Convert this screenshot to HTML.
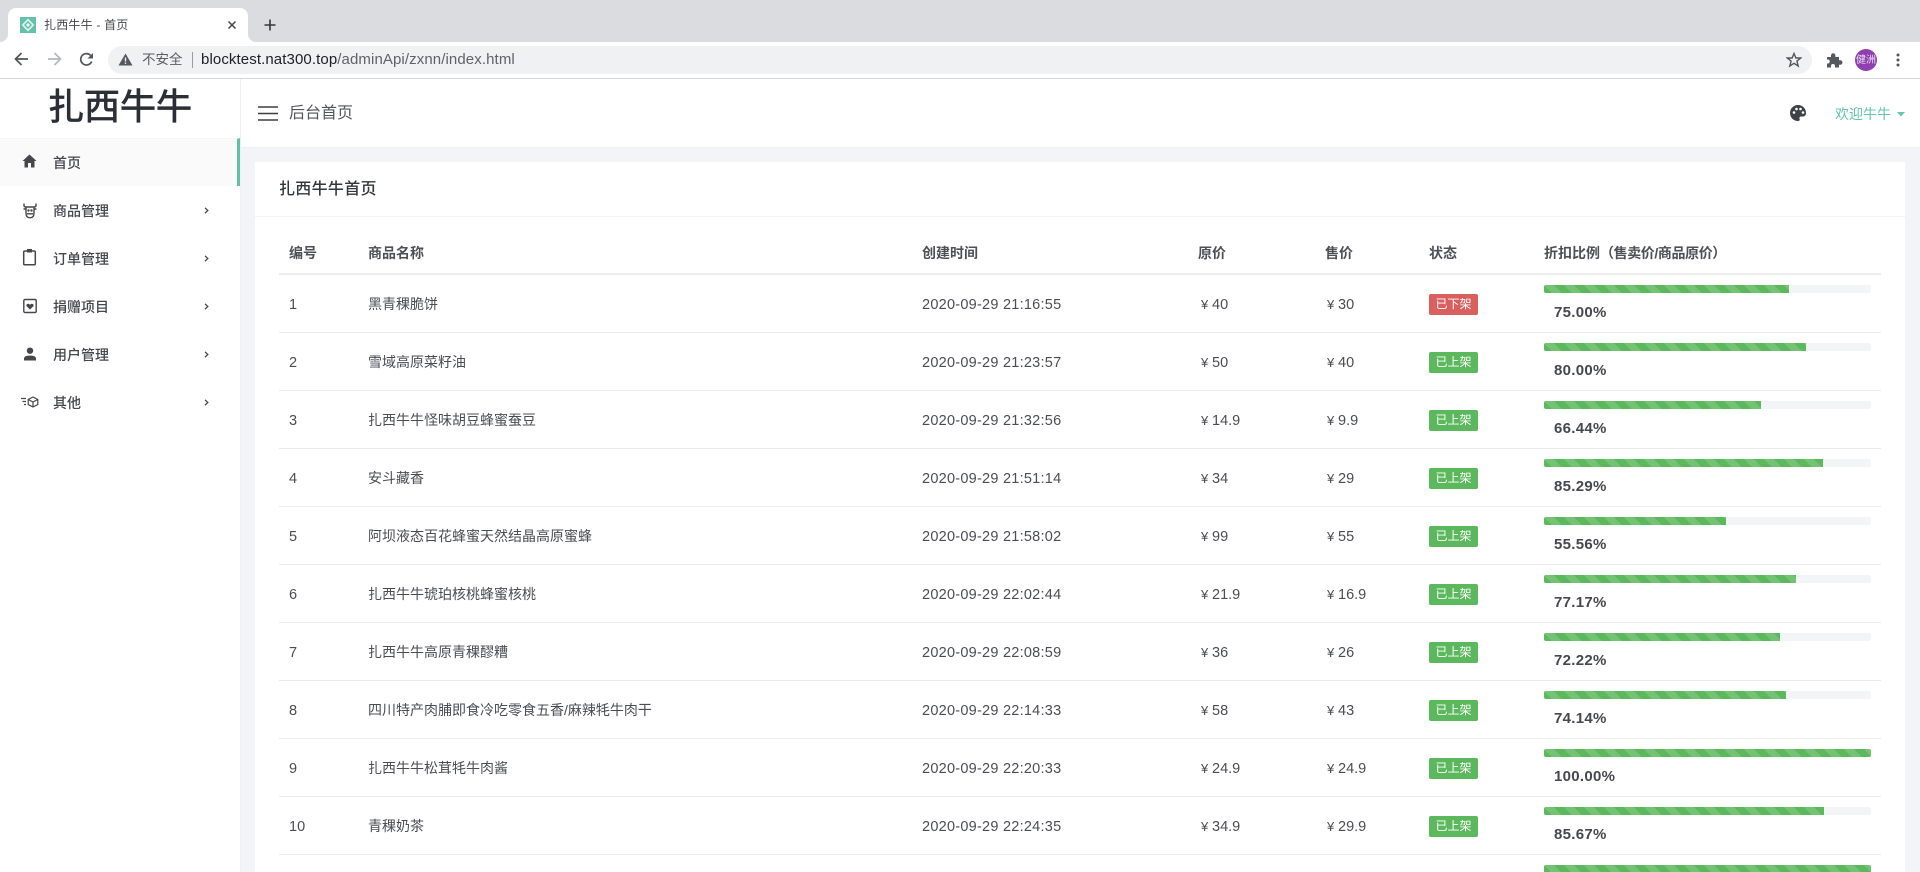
<!DOCTYPE html>
<html lang="zh">
<head>
<meta charset="utf-8">
<title>扎西牛牛 - 首页</title>
<style>
*{box-sizing:border-box;margin:0;padding:0}
html,body{width:1920px;height:872px;overflow:hidden;background:#f3f4f8}
body{position:relative;font-family:"Liberation Sans","Noto Sans CJK SC",sans-serif;color:#46484e;font-size:14px}
.a{position:absolute;white-space:nowrap}
svg{position:absolute;display:block}
#tabs{left:0;top:0;width:1920px;height:42px;background:#dadce0}
#tab{left:8px;top:8px;width:240px;height:34px;background:#fff;border-radius:8px 8px 0 0}
.fl{position:absolute;top:26px;width:8px;height:8px;background:#fff}
.fl i{display:block;width:8px;height:8px;background:#dadce0}
#bar{left:0;top:42px;width:1920px;height:37px;background:#fff;border-bottom:1px solid #d4d5d7}
#url{left:108px;top:46px;width:1704px;height:28px;border-radius:14px;background:#eff1f3}
#side{left:0;top:79px;width:241px;height:793px;background:#fff;border-right:1px solid #eef0f3}
.mi{left:53px;font-size:14px;font-weight:500;line-height:20px;color:#45474d}
#act{left:0;top:138px;width:240px;height:48px;background:#fafafb;border-top:1px solid #f5f5f6;border-right:3px solid #62bfa9}
#head{left:241px;top:79px;width:1679px;height:69px;background:#fff;border-bottom:1px solid #eef0f3}
#card{left:255px;top:162px;width:1650px;height:710px;background:#fff}
#chd{left:255px;top:216px;width:1650px;height:1px;background:#f3f4f5}
.th{top:243px;line-height:20px;font-weight:700;font-size:14px;color:#4e5056}
#thl{left:279px;top:273px;width:1602px;height:2px;background:#ebecee}
.r{position:absolute;left:279px;width:1602px;height:58px;border-bottom:1px solid #e9eaec}
.c{position:absolute;top:19px;line-height:20px;white-space:nowrap;color:#4b4d53}
.n{left:10px;font-size:14.5px;top:20px}
.t{left:89px}
.d{left:643px;font-size:14.5px;letter-spacing:.25px;top:20px}
.p1{left:922px;top:20px}
.p2{left:1048px;top:20px}
.p1 b,.p2 b{font-weight:400;display:inline-block;width:11px;font-size:13px}
.p1,.p2{font-size:14.5px}
.b{position:absolute;left:1150px;top:19px;width:49px;height:21px;border-radius:2px;background:#5cb85c;color:#fff;font-size:12px;line-height:21px;text-align:center}
.b.x{background:#d9605f}
.tr{position:absolute;left:1265px;top:10px;width:327px;height:8px;background:#f3f4f6;border-radius:2px;overflow:hidden}
.f{height:8px;background-color:#5cb85c;background-image:linear-gradient(45deg,rgba(255,255,255,.15) 25%,transparent 25%,transparent 50%,rgba(255,255,255,.15) 50%,rgba(255,255,255,.15) 75%,transparent 75%);background-size:20px 20px}
.v{position:absolute;left:1275px;top:28px;line-height:20px;font-weight:700;font-size:15px;letter-spacing:.3px;color:#46484e}
</style>
</head>
<body>
<div class="a" id="tabs"></div>
<div class="a" id="tab">
  <div class="fl" style="left:-8px"><i style="border-radius:0 0 8px 0"></i></div>
  <div class="fl" style="left:240px"><i style="border-radius:0 0 0 8px"></i></div>
</div>
<svg style="left:20px;top:17px" width="16" height="16" viewBox="0 0 16 16"><rect width="16" height="16" fill="#62c0ab"/><path d="M8 1.500L14.500 8L8 14.500L1.500 8Z" fill="#d9f1ec"/><path d="M8 4L12 8L8 12L4 8Z" fill="#62c0ab"/><path d="M8 6L10 8L8 10L6 8Z" fill="#fff"/></svg>
<div class="a" style="left:44px;top:16px;font-size:12px;line-height:18px;color:#45474b;letter-spacing:.2px">扎西牛牛 - 首页</div>
<svg style="left:227px;top:20px" width="10" height="10" viewBox="0 0 10 10"><path d="M1.500 1.500L8.500 8.500M8.500 1.500L1.500 8.500" stroke="#44464a" stroke-width="1.500" fill="none"/></svg>
<svg style="left:264px;top:19px" width="12" height="12" viewBox="0 0 12 12"><path d="M6 .5V11.500M.5 6H11.500" stroke="#35373b" stroke-width="1.600" fill="none"/></svg>

<div class="a" id="bar"></div>
<svg style="left:14px;top:52px" width="15" height="14" viewBox="0 0 15 14"><path d="M14 7H2M7.500 1L1.500 7L7.500 13" stroke="#53565b" stroke-width="1.700" fill="none"/></svg>
<svg style="left:47px;top:52px" width="15" height="14" viewBox="0 0 15 14"><path d="M1 7H13M7.500 1L13.500 7L7.500 13" stroke="#b6b8bb" stroke-width="1.700" fill="none"/></svg>
<svg style="left:79px;top:52px" width="15" height="15" viewBox="0 0 15 15"><path d="M12.700 9.500A5.700 5.700 0 1 1 11.600 3.400" stroke="#53565b" stroke-width="1.700" fill="none"/><path d="M14 1V6.500H8.500Z" fill="#53565b"/></svg>
<div class="a" id="url"></div>
<svg style="left:118px;top:53px" width="15" height="13" viewBox="0 0 15 13"><path d="M7.500 .5L14.500 12.500H.5Z" fill="#55585c"/><rect x="6.800" y="4.500" width="1.400" height="4" fill="#eff1f3"/><rect x="6.800" y="9.500" width="1.400" height="1.400" fill="#eff1f3"/></svg>
<div class="a" style="left:142px;top:51px;font-size:13.500px;line-height:18px;color:#5a5c60">不安全</div>
<div class="a" style="left:192px;top:52px;width:1px;height:16px;background:#9a9c9f"></div>
<div class="a" style="left:201px;top:51px;font-size:15px;line-height:18px;color:#5f6266;letter-spacing:.1px"><span style="color:#202124">blocktest.nat300.top</span>/adminApi/zxnn/index.html</div>
<svg style="left:1786px;top:52px" width="16" height="16" viewBox="0 0 16 16"><path d="M8 1.500L9.900 6H14.700L10.900 9.100L12.200 14L8 11.300L3.800 14L5.100 9.100L1.300 6H6.100Z" stroke="#53565b" stroke-width="1.400" fill="none"/></svg>
<svg style="left:1826px;top:52px" width="17" height="16" viewBox="0 0 17 16"><path d="M1 5H5V3.500A2.200 2.200 0 0 1 9.400 3.500V5H13V8.200H14.200A2.300 2.300 0 0 1 14.200 12.800H13V15.500H9V14A2 2 0 0 0 5 14V15.500H1V11.500H2.500A2.200 2.200 0 0 0 2.500 7.500H1Z" fill="#55585d"/></svg>
<svg style="left:1855px;top:49px" width="22" height="22" viewBox="0 0 22 22"><circle cx="11" cy="11" r="11" fill="#8e3fb0"/></svg>
<div class="a" style="left:1855px;top:49px;width:22px;text-align:center;font-size:10px;line-height:23px;color:#ecdff2">健洲</div>
<svg style="left:1895px;top:52px" width="6" height="16" viewBox="0 0 6 16"><circle cx="3" cy="3" r="1.500" fill="#53565b"/><circle cx="3" cy="8" r="1.500" fill="#53565b"/><circle cx="3" cy="13" r="1.500" fill="#53565b"/></svg>

<div class="a" id="side"></div>
<div class="a" style="left:0;top:79px;width:240px;text-align:center;font-size:36px;line-height:55px;font-weight:400;-webkit-text-stroke:.8px #2b2f36;color:#2b2f36">扎西牛牛</div>
<div class="a" id="act"></div>
<svg style="left:22px;top:154px" width="15" height="14" viewBox="0 0 15 14"><path d="M7.500 .5L14.500 7H12.500V13.500H9V9H6V13.500H2.500V7H.5Z" fill="#45474d"/></svg>
<div class="a mi" style="top:153px">首页</div>

<svg style="left:23px;top:203px" width="14" height="16" viewBox="0 0 14 16" fill="none" stroke="#45474d" stroke-width="1.400"><path d="M1 .5V2.500Q1 4 3 4H11Q13 4 13 2.500V.5"/><path d="M.5 6H3M11 6H13.500"/><path d="M3 4V10Q3 14.800 7 14.800Q11 14.800 11 10V4"/><path d="M4 10.800H10"/><circle cx="5.500" cy="7.500" r=".5" fill="#45474d"/><circle cx="8.500" cy="7.500" r=".5" fill="#45474d"/></svg>
<div class="a mi" style="top:201px">商品管理</div>
<svg style="left:204px;top:207px" width="5" height="7" viewBox="0 0 5 7"><path d="M1 .8L3.800 3.500L1 6.200" stroke="#45474d" stroke-width="1.300" fill="none"/></svg>

<svg style="left:22px;top:248px" width="15" height="18" viewBox="0 0 15 18" fill="none"><rect x="1.700" y="3" width="11.600" height="13.800" rx="1.200" stroke="#45474d" stroke-width="1.500"/><rect x="5" y="1" width="5" height="3.500" fill="#45474d"/></svg>
<div class="a mi" style="top:249px">订单管理</div>
<svg style="left:204px;top:255px" width="5" height="7" viewBox="0 0 5 7"><path d="M1 .8L3.800 3.500L1 6.200" stroke="#45474d" stroke-width="1.300" fill="none"/></svg>

<svg style="left:23px;top:298px" width="14" height="16" viewBox="0 0 14 16" fill="none"><rect x=".8" y="1.500" width="12.400" height="13" rx="1.200" stroke="#45474d" stroke-width="1.400"/><path d="M7 11.500L3.600 8.200Q3 6.800 4.200 6Q5.600 5.300 7 6.800Q8.400 5.300 9.800 6Q11 6.800 10.400 8.200Z" fill="#45474d"/></svg>
<div class="a mi" style="top:297px">捐赠项目</div>
<svg style="left:204px;top:303px" width="5" height="7" viewBox="0 0 5 7"><path d="M1 .8L3.800 3.500L1 6.200" stroke="#45474d" stroke-width="1.300" fill="none"/></svg>

<svg style="left:23px;top:347px" width="14" height="14" viewBox="0 0 14 14"><circle cx="7" cy="3.700" r="3.200" fill="#45474d"/><path d="M1 13.500V11.500Q1 8.500 7 8.500Q13 8.500 13 11.500V13.500Z" fill="#45474d"/></svg>
<div class="a mi" style="top:345px">用户管理</div>
<svg style="left:204px;top:351px" width="5" height="7" viewBox="0 0 5 7"><path d="M1 .8L3.800 3.500L1 6.200" stroke="#45474d" stroke-width="1.300" fill="none"/></svg>

<svg style="left:21px;top:396px" width="18" height="12" viewBox="0 0 18 12" fill="none" stroke="#45474d" stroke-width="1.200"><path d="M0 2.500H5M1.500 5.500H5M3 8.500H5"/><path d="M12 1L16.800 3.500V8.500L12 11L7.200 8.500V3.500Z"/><path d="M7.200 3.500L12 6L16.800 3.500M12 6V11"/></svg>
<div class="a mi" style="top:393px">其他</div>
<svg style="left:204px;top:399px" width="5" height="7" viewBox="0 0 5 7"><path d="M1 .8L3.800 3.500L1 6.200" stroke="#45474d" stroke-width="1.300" fill="none"/></svg>

<div class="a" id="head"></div>
<svg style="left:258px;top:106px" width="20" height="16" viewBox="0 0 20 16"><path d="M0 1H20M0 7.500H20M0 14H20" stroke="#3c3e44" stroke-width="1.600" fill="none"/></svg>
<div class="a" style="left:289px;top:103px;font-size:16px;line-height:21px;color:#53555a">后台首页</div>
<svg style="left:1789px;top:104px" width="18" height="18" viewBox="0 0 18 18"><path d="M9 1C4.500 1 1 4.500 1 9C1 13.500 4.500 17 9 17C10.500 17 11 16 10.600 15C10.200 14 10.500 12.500 12 12.500H14C15.800 12.500 17 11 17 9C17 4.500 13.500 1 9 1Z" fill="#3f4147"/><circle cx="5" cy="8.500" r="1.300" fill="#fff"/><circle cx="7.500" cy="5" r="1.300" fill="#fff"/><circle cx="11.500" cy="5" r="1.300" fill="#fff"/><circle cx="14" cy="8.500" r="1.300" fill="#fff"/></svg>
<div class="a" style="left:1835px;top:104px;font-size:14px;line-height:20px;color:#62c6ad">欢迎牛牛</div>
<svg style="left:1897px;top:112px" width="8" height="5" viewBox="0 0 8 5"><path d="M0 0H8L4 4.500Z" fill="#62c6ad"/></svg>

<div class="a" id="card"></div>
<div class="a" style="left:279px;top:178px;font-size:16px;line-height:24px;font-weight:500;color:#33363c;letter-spacing:.3px">扎西牛牛首页</div>
<div class="a" id="chd"></div>

<div class="a th" style="left:289px">编号</div>
<div class="a th" style="left:368px">商品名称</div>
<div class="a th" style="left:922px">创建时间</div>
<div class="a th" style="left:1198px">原价</div>
<div class="a th" style="left:1325px">售价</div>
<div class="a th" style="left:1429px">状态</div>
<div class="a th" style="left:1544px">折扣比例<span style="letter-spacing:-.4px">（售卖价/商品原价）</span></div>
<div class="a" id="thl"></div>

<div class="r" style="top:275px"><span class="c n">1</span><span class="c t">黑青稞脆饼</span><span class="c d">2020-09-29 21:16:55</span><span class="c p1"><b>¥</b>40</span><span class="c p2"><b>¥</b>30</span><span class="b x">已下架</span><div class="tr"><div class="f" style="width:75%"></div></div><span class="v">75.00%</span></div>
<div class="r" style="top:333px"><span class="c n">2</span><span class="c t">雪域高原菜籽油</span><span class="c d">2020-09-29 21:23:57</span><span class="c p1"><b>¥</b>50</span><span class="c p2"><b>¥</b>40</span><span class="b">已上架</span><div class="tr"><div class="f" style="width:80%"></div></div><span class="v">80.00%</span></div>
<div class="r" style="top:391px"><span class="c n">3</span><span class="c t">扎西牛牛怪味胡豆蜂蜜蚕豆</span><span class="c d">2020-09-29 21:32:56</span><span class="c p1"><b>¥</b>14.9</span><span class="c p2"><b>¥</b>9.9</span><span class="b">已上架</span><div class="tr"><div class="f" style="width:66.44%"></div></div><span class="v">66.44%</span></div>
<div class="r" style="top:449px"><span class="c n">4</span><span class="c t">安斗藏香</span><span class="c d">2020-09-29 21:51:14</span><span class="c p1"><b>¥</b>34</span><span class="c p2"><b>¥</b>29</span><span class="b">已上架</span><div class="tr"><div class="f" style="width:85.29%"></div></div><span class="v">85.29%</span></div>
<div class="r" style="top:507px"><span class="c n">5</span><span class="c t">阿坝液态百花蜂蜜天然结晶高原蜜蜂</span><span class="c d">2020-09-29 21:58:02</span><span class="c p1"><b>¥</b>99</span><span class="c p2"><b>¥</b>55</span><span class="b">已上架</span><div class="tr"><div class="f" style="width:55.56%"></div></div><span class="v">55.56%</span></div>
<div class="r" style="top:565px"><span class="c n">6</span><span class="c t">扎西牛牛琥珀核桃蜂蜜核桃</span><span class="c d">2020-09-29 22:02:44</span><span class="c p1"><b>¥</b>21.9</span><span class="c p2"><b>¥</b>16.9</span><span class="b">已上架</span><div class="tr"><div class="f" style="width:77.17%"></div></div><span class="v">77.17%</span></div>
<div class="r" style="top:623px"><span class="c n">7</span><span class="c t">扎西牛牛高原青稞醪糟</span><span class="c d">2020-09-29 22:08:59</span><span class="c p1"><b>¥</b>36</span><span class="c p2"><b>¥</b>26</span><span class="b">已上架</span><div class="tr"><div class="f" style="width:72.22%"></div></div><span class="v">72.22%</span></div>
<div class="r" style="top:681px"><span class="c n">8</span><span class="c t">四川特产肉脯即食冷吃零食五香/麻辣牦牛肉干</span><span class="c d">2020-09-29 22:14:33</span><span class="c p1"><b>¥</b>58</span><span class="c p2"><b>¥</b>43</span><span class="b">已上架</span><div class="tr"><div class="f" style="width:74.14%"></div></div><span class="v">74.14%</span></div>
<div class="r" style="top:739px"><span class="c n">9</span><span class="c t">扎西牛牛松茸牦牛肉酱</span><span class="c d">2020-09-29 22:20:33</span><span class="c p1"><b>¥</b>24.9</span><span class="c p2"><b>¥</b>24.9</span><span class="b">已上架</span><div class="tr"><div class="f" style="width:100%"></div></div><span class="v">100.00%</span></div>
<div class="r" style="top:797px"><span class="c n">10</span><span class="c t">青稞奶茶</span><span class="c d">2020-09-29 22:24:35</span><span class="c p1"><b>¥</b>34.9</span><span class="c p2"><b>¥</b>29.9</span><span class="b">已上架</span><div class="tr"><div class="f" style="width:85.67%"></div></div><span class="v">85.67%</span></div>
<div class="r" style="top:855px;border-bottom:0;height:17px;overflow:hidden"><div class="tr"><div class="f" style="width:100%"></div></div></div>
</body>
</html>
